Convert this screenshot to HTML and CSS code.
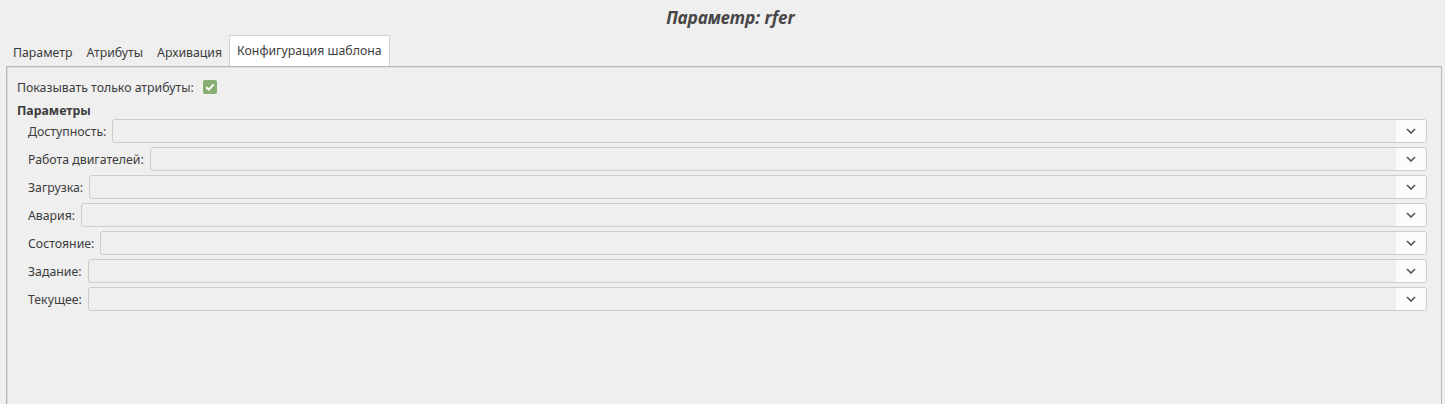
FILE: index.html
```html
<!DOCTYPE html>
<html lang="ru">
<head>
<meta charset="UTF-8" />
<title>Параметр: rfer</title>
<link rel="stylesheet" href="styles.css">
</head>
<body>

<header class="title">Параметр: rfer</header>

<nav class="tabs">
  <div class="tab">Параметр</div>
  <div class="tab">Атрибуты</div>
  <div class="tab">Архивация</div>
  <div class="tab active">Конфигурация шаблона</div>
</nav>

<section class="panel">
  <div class="check-row">
    <span>Показывать только атрибуты:</span>
    <span class="checkbox">
      <svg width="10" height="8" viewBox="0 0 10 8"><path d="M1.2 4.2 L3.8 6.6 L8.8 1.4" fill="none" stroke="#fff" stroke-width="2"/></svg>
    </span>
  </div>
  <div class="group-title">Параметры</div>
  <div class="fields">
    <div class="field"><label>Доступность:</label><div class="combo"><span class="arrow"><svg width="10" height="6" viewBox="0 0 10 6"><path d="M1 1 L5 5 L9 1" fill="none" stroke="#555" stroke-width="1.6"/></svg></span></div></div>
    <div class="field"><label>Работа двигателей:</label><div class="combo"><span class="arrow"><svg width="10" height="6" viewBox="0 0 10 6"><path d="M1 1 L5 5 L9 1" fill="none" stroke="#555" stroke-width="1.6"/></svg></span></div></div>
    <div class="field"><label>Загрузка:</label><div class="combo"><span class="arrow"><svg width="10" height="6" viewBox="0 0 10 6"><path d="M1 1 L5 5 L9 1" fill="none" stroke="#555" stroke-width="1.6"/></svg></span></div></div>
    <div class="field"><label>Авария:</label><div class="combo"><span class="arrow"><svg width="10" height="6" viewBox="0 0 10 6"><path d="M1 1 L5 5 L9 1" fill="none" stroke="#555" stroke-width="1.6"/></svg></span></div></div>
    <div class="field"><label>Состояние:</label><div class="combo"><span class="arrow"><svg width="10" height="6" viewBox="0 0 10 6"><path d="M1 1 L5 5 L9 1" fill="none" stroke="#555" stroke-width="1.6"/></svg></span></div></div>
    <div class="field"><label>Задание:</label><div class="combo"><span class="arrow"><svg width="10" height="6" viewBox="0 0 10 6"><path d="M1 1 L5 5 L9 1" fill="none" stroke="#555" stroke-width="1.6"/></svg></span></div></div>
    <div class="field"><label>Текущее:</label><div class="combo"><span class="arrow"><svg width="10" height="6" viewBox="0 0 10 6"><path d="M1 1 L5 5 L9 1" fill="none" stroke="#555" stroke-width="1.6"/></svg></span></div></div>
  </div>
</section>

</body>
</html>
```

FILE: styles.css
```css
body {
  font-family: 'Noto Sans', 'Open Sans', sans-serif;
  font-size: 12.3px;
  background: #efefef;
  color: #3c3c3c;
  margin: 0;
  padding: 0;
  height: 404px;
  overflow: hidden;
}
.title {
  height: 36px;
  line-height: 36px;
  text-align: center;
  font-size: 17px;
  font-weight: bold;
  font-style: italic;
  color: #474747;
  padding-left: 16px;
}
.tabs {
  display: flex;
  padding-left: 6px;
  height: 30px;
  align-items: flex-end;
}
.tab {
  padding: 0 7px;
  height: 29px;
  line-height: 31px;
}
.tab.active {
  background: #fff;
  border: 1px solid #d3d3d3;
  border-bottom: none;
  height: 30px;
  line-height: 30px;
}
.panel {
  margin: 0 3px 0 6px;
  border: 1px solid #b8b8b8;
  box-shadow: inset 1px 1px 0 #dcdcdc;
  border-bottom: none;
  height: 340px;
  padding: 10px 14px 0 10px;
}
.check-row {
  display: flex;
  align-items: center;
  gap: 9px;
  height: 20px;
}
.checkbox {
  width: 14px;
  height: 14px;
  border-radius: 2px;
  background: #88ad70;
  display: flex;
  align-items: center;
  justify-content: center;
}
.group-title {
  font-weight: bold;
  margin-top: 6px;
  height: 15px;
  line-height: 16px;
}
.fields {
  padding-left: 11px;
  margin-top: 1px;
}
.field {
  display: flex;
  align-items: center;
  gap: 6px;
  height: 24px;
  margin-bottom: 4px;
}
.combo {
  flex: 1;
  height: 22px;
  border: 1px solid #cdcdcd;
  border-radius: 3px;
  background: #efefef;
  display: flex;
  justify-content: flex-end;
}
.arrow {
  width: 30px;
  background: #fbfbfb;
  border-radius: 0 3px 3px 0;
  display: flex;
  align-items: center;
  justify-content: center;
}
```
